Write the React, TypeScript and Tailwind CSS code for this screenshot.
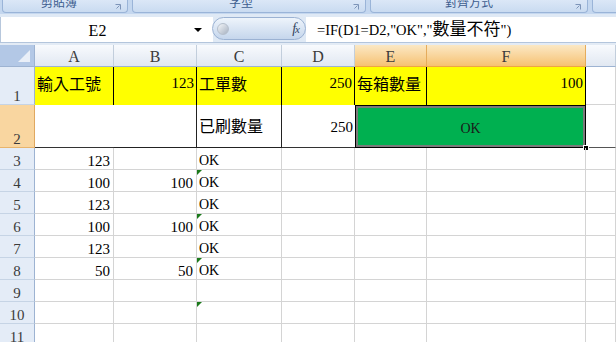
import React from 'react';

const grid = 'border-[#d4d4d4]';

type CellProps = {
  w: string;
  right?: boolean;
  tri?: boolean;
  small?: boolean;
  children?: React.ReactNode;
};

const Cell: React.FC<CellProps> = ({ w, right, tri, small, children }) => (
  <div
    className={`${w} h-full shrink-0 relative flex items-end pb-[1px] leading-[14px] border-r border-b ${grid} ${
      right ? 'justify-end pr-[3px]' : 'pl-[2px]'
    } ${small ? 'text-[14px]' : 'text-[15px]'}`}
  >
    {tri && (
      <span className="absolute left-0 top-0 w-0 h-0 border-t-[5px] border-r-[5px] border-t-[#1b7a1b] border-r-transparent" />
    )}
    {children}
  </div>
);

const RowHead: React.FC<{ n: number; sel?: boolean }> = ({ n, sel }) => (
  <div
    className={`w-[35px] h-full shrink-0 flex items-end justify-center pb-[1px] leading-[14px] text-[15px] text-[#3b3b3b] border-r border-b ${
      sel
        ? 'bg-[#f9d6a0] border-r-[#e0a860] border-b-[#e8b46c]'
        : 'bg-[#e4ecf7] border-r-[#9db3d2] border-b-[#c6d4e5]'
    }`}
  >
    {n}
  </div>
);

const ColHead: React.FC<{ w: string; label?: string; sel?: boolean }> = ({ w, label, sel }) => (
  <div
    className={`${w} h-full shrink-0 flex items-center justify-center pt-[2px] text-[16px] text-[#3b3b3b] border-r border-b bg-linear-to-b ${
      sel
        ? 'from-[#fbe8c4] to-[#f6c271] border-r-[#e5ac5c] border-b-[#eea545]'
        : 'from-[#f8fafd] to-[#e1e8f2] border-r-[#c2cedc] border-b-[#9db3d2]'
    }`}
  >
    {label}
  </div>
);

const Launcher = () => (
  <svg width="6" height="6" viewBox="0 0 6 6" className="absolute right-[6px] bottom-[2px]">
    <path d="M0.5 0.5 H5.5 V5.5" fill="none" stroke="#7d94b8" strokeWidth="1" />
    <path d="M1.5 4.5 L4.5 1.5" stroke="#7d94b8" strokeWidth="1" />
  </svg>
);

const RibbonGroup: React.FC<{ w: string; pl: string; label: string }> = ({ w, pl, label }) => (
  <div
    className={`${w} h-[13px] shrink-0 relative overflow-hidden rounded-b-[4px] border border-t-0 border-[#9ab4d8] bg-linear-to-b from-[#dbe7f7] to-[#c9dbf1] ${pl} font-['Noto_Sans_CJK_TC',sans-serif] text-[12px] leading-[12px] text-[#3d5d8f]`}
  >
    <div className="-mt-[4px]">{label}</div>
    <Launcher />
  </div>
);

const rows = [
  { n: 3, a: '123', b: '', c: 'OK' },
  { n: 4, a: '100', b: '100', c: 'OK', tri: true },
  { n: 5, a: '123', b: '', c: 'OK' },
  { n: 6, a: '100', b: '100', c: 'OK', tri: true },
  { n: 7, a: '123', b: '', c: 'OK' },
  { n: 8, a: '50', b: '50', c: 'OK', tri: true },
  { n: 9, a: '', b: '', c: '' },
  { n: 10, a: '', b: '', c: '', tri: true },
  { n: 11, a: '', b: '', c: '' },
];

export default function App() {
  return (
    <div className="w-[616px] h-[342px] overflow-hidden bg-white text-black font-['Liberation_Serif','Noto_Sans_CJK_TC',serif]">
      {/* Ribbon bottom edge */}
      <div className="h-[14px] flex gap-[4px] pl-[2px] bg-[#c4d7ef]">
        <RibbonGroup w="w-[126px]" pl="pl-[38px]" label="剪貼簿" />
        <RibbonGroup w="w-[234px]" pl="pl-[96px]" label="字型" />
        <RibbonGroup w="w-[218px]" pl="pl-[74px]" label="對齊方式" />
        <RibbonGroup w="w-[40px]" pl="pl-[20px]" label="" />
      </div>
      <div className="h-[3px] bg-[#dfe9f5]" />

      {/* Formula bar */}
      <div className="h-[25px] flex bg-[#dfe9f5]">
        <div className="w-[213px] h-full shrink-0 bg-white border-l border-[#b7c7dc] flex items-center">
          <div className="w-[193px] text-center text-[16px] leading-none pt-[2px]">E2</div>
          <div className="w-0 h-0 border-l-[4px] border-r-[4px] border-t-[4px] border-l-transparent border-r-transparent border-t-black" />
        </div>
        <div className="w-[94px] h-[23px] shrink-0 rounded-full border border-[#9bb2d3] bg-linear-to-b from-[#eef4fb] to-[#c5d6ec] flex items-center justify-between pl-[4px] pr-[6px] -ml-[1px]">
          <div className="w-[12px] h-[12px] rounded-full bg-linear-to-br from-[#f4f6f9] to-[#a8b3c2] border border-[#b5bfcc]" />
          <span className="italic text-[14px] leading-none text-[#33445e] tracking-[-1px]">
            f<span className="text-[11px]">x</span>
          </span>
        </div>
        <div className="flex-1 h-full bg-white flex items-center pl-[11px]">
          <span className="text-[14.5px] leading-[18px] whitespace-nowrap">
            =IF(D1=D2,"OK","<span className="text-[17px]">數量不符</span>")
          </span>
        </div>
      </div>
      <div className="h-[3px] bg-[#e3ebf5] border-t border-[#b3c5dc]" />

      {/* Column headers */}
      <div className="flex h-[22px]">
        <div className="w-[35px] h-full shrink-0 bg-[#b3c8e6] border-r border-b border-[#9db3d2] flex items-end justify-end pr-[4px] pb-[4px]">
          <div className="w-0 h-0 border-b-[12px] border-l-[12px] border-b-[#e9eff8] border-l-transparent" />
        </div>
        <ColHead w="w-[79px]" label="A" />
        <ColHead w="w-[83px]" label="B" />
        <ColHead w="w-[85px]" label="C" />
        <ColHead w="w-[73px]" label="D" />
        <ColHead w="w-[72px]" label="E" sel />
        <ColHead w="w-[159px]" label="F" sel />
        <ColHead w="w-[30px]" />
      </div>

      {/* Row 1 */}
      <div className="flex h-[38px] text-[16px]">
        <RowHead n={1} />
        <div className="w-[79px] h-full shrink-0 bg-[#ffff00] border-r border-black flex items-center pl-[2px] pb-[3px]">輸入工號</div>
        <div className="w-[83px] h-full shrink-0 bg-[#ffff00] border-r border-black flex items-center justify-end pr-[2px] pb-[6px] text-[15px]">123</div>
        <div className="w-[85px] h-full shrink-0 bg-[#ffff00] border-r border-black flex items-center pl-[2px] pb-[3px]">工單數</div>
        <div className="w-[73px] h-full shrink-0 bg-[#ffff00] border-r border-black flex items-center justify-end pr-[2px] pb-[6px] text-[15px]">250</div>
        <div className="w-[72px] h-full shrink-0 bg-[#ffff00] border-r border-black flex items-center pl-[2px] pb-[3px]">每箱數量</div>
        <div className="w-[159px] h-full shrink-0 bg-[#ffff00] border-r border-black flex items-center justify-end pr-[2px] pb-[6px] text-[15px]">100</div>
        <div className={`w-[30px] h-full shrink-0 border-r border-b ${grid}`} />
      </div>

      {/* Row 2 */}
      <div className="flex h-[43px] text-[16px]">
        <RowHead n={2} sel />
        <div className="w-[79px] h-full shrink-0 border-b border-[#333]" />
        <div className="w-[83px] h-full shrink-0 border-r border-b border-[#222]" />
        <div className="w-[85px] h-full shrink-0 border-r border-b border-[#222] flex items-center pl-[2px] pt-[1px]">已刷數量</div>
        <div className="w-[73px] h-full shrink-0 border-b border-[#333] flex items-center justify-end pr-[2px] pt-[2px] text-[15px]">250</div>
        <div className="w-[231px] h-full shrink-0 relative border border-black">
          <div className="w-full h-full border-2 border-[#7a7a7a] bg-[#00b050] flex items-center justify-center pt-[3px] text-[14px] text-[#1a1a1a]">
            OK
          </div>
          <div className="absolute -right-[4px] -bottom-[4px] w-[6px] h-[6px] bg-black border border-white" />
        </div>
        <div className="w-[30px] h-full shrink-0 border-r border-b border-r-[#d4d4d4] border-b-[#555]" />
      </div>

      {/* Rows 3+ */}
      {rows.map((r) => (
        <div key={r.n} className="flex h-[22px]">
          <RowHead n={r.n} />
          <Cell w="w-[79px]" right>{r.a}</Cell>
          <Cell w="w-[83px]" right>{r.b}</Cell>
          <Cell w="w-[85px]" tri={r.tri} small>{r.c}</Cell>
          <Cell w="w-[73px]" />
          <Cell w="w-[72px]" />
          <Cell w="w-[159px]" />
          <Cell w="w-[30px]" />
        </div>
      ))}
    </div>
  );
}
